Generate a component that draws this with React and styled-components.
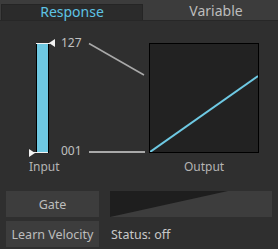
import styled, { createGlobalStyle } from "styled-components";

const GlobalStyle = createGlobalStyle`
  html, body {
    margin: 0;
    padding: 0;
    background: #2f2f2f;
  }
  body {
    font-family: "Noto Sans", "Liberation Sans", sans-serif;
    width: 278px;
    height: 249px;
    overflow: hidden;
  }
`;

const Panel = styled.div`
  width: 278px;
  height: 249px;
  background: #2f2f2f;
  color: #c8c8c8;
`;

const TabBar = styled.div`
  display: flex;
  background: #3c3c3c;
  padding-top: 4px;
  border-bottom: 1px solid #272727;
`;

const Tab = styled.div`
  box-sizing: border-box;
  height: 16px;
  line-height: 13px;
  font-size: 14px;
  text-align: center;
  width: ${(p) => (p.$active ? "142px" : "135px")};
  margin-left: ${(p) => (p.$active ? "1px" : "0")};
  padding-left: ${(p) => (p.$active ? "0" : "11px")};
  background: ${(p) => (p.$active ? "#2b2b2b" : "transparent")};
  border: ${(p) => (p.$active ? "1px solid #252525" : "none")};
  border-bottom: none;
  color: ${(p) => (p.$active ? "#5ec3e4" : "#bdbdbd")};
`;

const Main = styled.div`
  box-sizing: border-box;
  height: 170px;
  padding: 15px 0 0 29px;
  display: flex;
  align-items: flex-start;
`;

const SliderCol = styled.div`
  width: 28px;
  margin-right: 4px;
  margin-top: 7px;
  display: flex;
  flex-direction: column;
`;

const Track = styled.div`
  position: relative;
  box-sizing: border-box;
  width: 13px;
  height: 110px;
  margin-left: 7px;
  background: #6ec9e3;
  border-left: 1px solid #000;
  border-right: 1px solid #000;
`;

const HandleLine = styled.div`
  position: absolute;
  height: 1px;
  background: #f2f2f2;
  left: ${(p) => p.$left}px;
  width: ${(p) => p.$width}px;
  ${(p) => (p.$bottom ? "bottom: 0;" : "top: 0;")}
`;

const Arrow = styled.div`
  position: absolute;
  width: 0;
  height: 0;
  border-top: 4px solid transparent;
  border-bottom: 4px solid transparent;
  ${(p) =>
    p.$pointLeft
      ? "border-right: 6px solid #f2f2f2; left: 12px; top: -4px;"
      : "border-left: 6px solid #f2f2f2; left: -8px; bottom: -4px;"}
`;

const Caption = styled.div`
  margin-top: 7px;
  font-size: 12px;
  line-height: 14px;
  color: #b4b4b4;
  text-align: center;
  white-space: nowrap;
`;

const Values = styled.div`
  width: 26px;
  height: 122px;
  display: flex;
  flex-direction: column;
  justify-content: space-between;
  font-size: 12px;
  line-height: 14px;
  color: #c0c0c0;
`;

const Connectors = styled.svg`
  display: block;
  width: 62px;
  height: 122px;
`;

const GraphCol = styled.div`
  margin-top: 7px;
  display: flex;
  flex-direction: column;
  align-items: center;
`;

const Graph = styled.div`
  box-sizing: border-box;
  width: 110px;
  height: 110px;
  border: 1px solid #000;
  background: #222222;

  svg {
    display: block;
  }
`;

const Controls = styled.div`
  display: grid;
  grid-template-columns: 93px 162px;
  grid-template-rows: 26px 26px;
  column-gap: 11px;
  row-gap: 4px;
  padding: 0 6px;
`;

const Button = styled.div`
  display: flex;
  align-items: center;
  justify-content: center;
  background: #3d3d3d;
  color: #bdbdbd;
  font-size: 12.5px;
  white-space: nowrap;
`;

const GateMeter = styled.svg`
  display: block;
  width: 162px;
  height: 26px;
  background: #3d3d3d;
`;

const Status = styled.div`
  display: flex;
  align-items: center;
  padding-left: 1px;
  font-size: 12.5px;
  color: #c8c8c8;
`;

export default function App() {
  return (
    <Panel>
      <GlobalStyle />
      <TabBar>
        <Tab $active>Response</Tab>
        <Tab>Variable</Tab>
      </TabBar>
      <Main>
        <SliderCol>
          <Track>
            <HandleLine $left={-1} $width={14} />
            <Arrow $pointLeft />
            <HandleLine $bottom $left={-5} $width={16} />
            <Arrow />
          </Track>
          <Caption>Input</Caption>
        </SliderCol>
        <Values>
          <span>127</span>
          <span>001</span>
        </Values>
        <Connectors viewBox="0 0 62 122">
          <line x1="2" y1="7.5" x2="57" y2="39" stroke="#a9a9a9" strokeWidth="1.5" />
          <line x1="2" y1="116" x2="58" y2="116" stroke="#a9a9a9" strokeWidth="2" />
        </Connectors>
        <GraphCol>
          <Graph>
            <svg width="108" height="108" viewBox="0 0 108 108">
              <line x1="0" y1="108" x2="108" y2="32" stroke="#6ec9e3" strokeWidth="2" />
            </svg>
          </Graph>
          <Caption>Output</Caption>
        </GraphCol>
      </Main>
      <Controls>
        <Button>Gate</Button>
        <GateMeter viewBox="0 0 162 26" preserveAspectRatio="none">
          <polygon points="0,0 118,0 0,26" fill="#1e1e1e" />
        </GateMeter>
        <Button>Learn Velocity</Button>
        <Status>Status: off</Status>
      </Controls>
    </Panel>
  );
}
